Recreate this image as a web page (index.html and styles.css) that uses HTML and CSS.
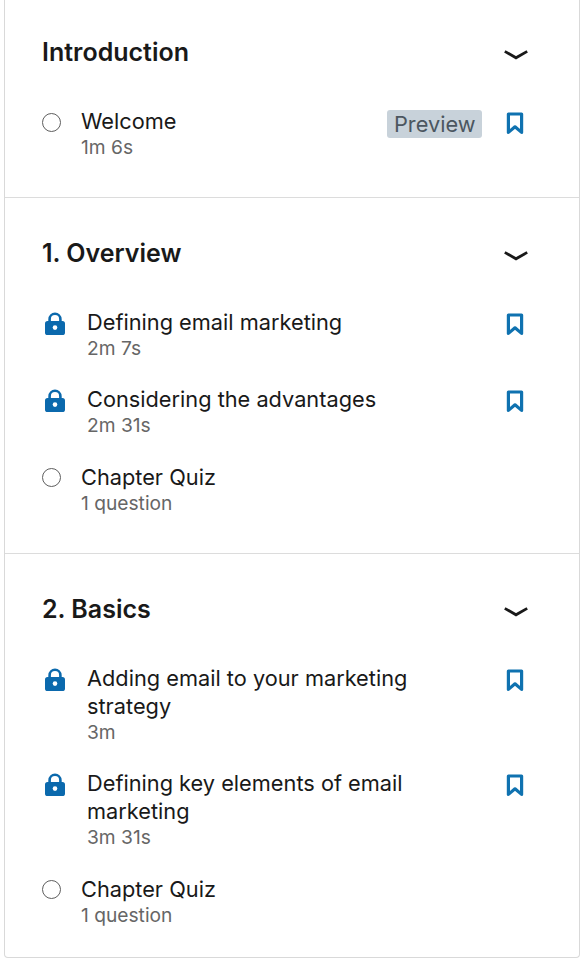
FILE: index.html
```html
<!DOCTYPE html>
<html lang="en">
<head>
<meta charset="utf-8">
<title>Course contents</title>
<link rel="stylesheet" href="styles.css">
</head>
<body>
<svg class="defs" width="0" height="0" aria-hidden="true">
  <symbol id="chev" viewBox="0 0 24 14"><path d="M.8 3.4 12 9.8 23.2 3.4" fill="none" stroke="#191919" stroke-width="2.8"/></symbol>
  <symbol id="mark" viewBox="0 0 18 24"><path d="M2.4 3h13.2v18.4L9 15.8 2.4 21.4z" fill="none" stroke="#0f72b0" stroke-width="3.2" stroke-linejoin="round"/></symbol>
  <symbol id="lock" viewBox="0 0 22 24"><path d="M5.6 10V7.2a5.4 5.4 0 0 1 10.8 0V10" fill="none" stroke="#0b69ad" stroke-width="2.6"/><rect x="1" y="9" width="20" height="14" rx="2.6" fill="#0b69ad"/><circle cx="11" cy="15.6" r="2.3" fill="#fff"/></symbol>
</svg>
<main class="panel">
  <section class="chapter intro">
    <header class="chapter-head"><h2>Introduction</h2><svg class="chev"><use href="#chev"/></svg></header>
    <div class="item quiz">
      <span class="radio"></span>
      <div class="body"><div class="title">Welcome</div><div class="meta">1m 6s</div></div>
      <span class="preview">Preview</span>
      <svg class="mark"><use href="#mark"/></svg>
    </div>
  </section>
  <section class="chapter">
    <header class="chapter-head"><h2>1. Overview</h2><svg class="chev"><use href="#chev"/></svg></header>
    <div class="item">
      <svg class="lock"><use href="#lock"/></svg>
      <div class="body"><div class="title">Defining email marketing</div><div class="meta">2m 7s</div></div>
      <svg class="mark"><use href="#mark"/></svg>
    </div>
    <div class="item">
      <svg class="lock"><use href="#lock"/></svg>
      <div class="body"><div class="title">Considering the advantages</div><div class="meta">2m 31s</div></div>
      <svg class="mark"><use href="#mark"/></svg>
    </div>
    <div class="item quiz">
      <span class="radio"></span>
      <div class="body"><div class="title">Chapter Quiz</div><div class="meta">1 question</div></div>
    </div>
  </section>
  <section class="chapter">
    <header class="chapter-head"><h2>2. Basics</h2><svg class="chev"><use href="#chev"/></svg></header>
    <div class="item">
      <svg class="lock"><use href="#lock"/></svg>
      <div class="body"><div class="title">Adding email to your marketing<br>strategy</div><div class="meta">3m</div></div>
      <svg class="mark"><use href="#mark"/></svg>
    </div>
    <div class="item">
      <svg class="lock"><use href="#lock"/></svg>
      <div class="body"><div class="title">Defining key elements of email<br>marketing</div><div class="meta">3m 31s</div></div>
      <svg class="mark"><use href="#mark"/></svg>
    </div>
    <div class="item quiz">
      <span class="radio"></span>
      <div class="body"><div class="title">Chapter Quiz</div><div class="meta">1 question</div></div>
    </div>
  </section>
</main>
</body>
</html>
```
FILE: styles.css
```css
* { box-sizing: border-box; }
html, body { margin: 0; padding: 0; background: #fff; }
body { font-family: Inter, "Liberation Sans", sans-serif; color: #191919; padding: 0 4px; }
.defs { position: absolute; }
.panel {
  height: 958px;
  border: 1px solid #d9d9d9;
  border-top: 0;
  border-radius: 0 0 4px 4px;
  display: flex;
  flex-direction: column;
}
.chapter { padding: 40px 0 38.4px 37px; border-bottom: 1px solid #dcdcdc; }
.chapter.intro { padding: 37px 0 38px 37px; }
.chapter:last-child { border-bottom: 0; }
.chapter-head {
  display: flex;
  justify-content: space-between;
  align-items: center;
  height: 30px;
  margin-bottom: 40px;
}
.chapter-head h2 { margin: 0; font-size: 25px; line-height: 30px; font-weight: 600; }
.chev { width: 24px; height: 14px; margin-right: 51px; margin-top: 6px; }
.item { display: flex; align-items: flex-start; margin-bottom: 25.3px; }
.item:last-child { margin-bottom: 0; }
.radio {
  flex: none;
  width: 19px;
  height: 19px;
  border: 1px solid #5e5e5e;
  border-radius: 50%;
  margin: 5.5px 20px 0 0;
}
.lock { flex: none; width: 22px; height: 24px; margin: 4px 21px 0 2px; }
.body { flex: 1; min-width: 0; }
.title { font-size: 21.75px; line-height: 28px; color: #191919; }
.meta { font-size: 19.2px; line-height: 24px; color: #666; }
.preview {
  background: #c8d2da;
  color: #4b5660;
  font-size: 21.75px;
  line-height: 28px;
  padding: 0 6.5px;
  border-radius: 3px;
  margin: 3px 24px 0 0;
}
.mark { flex: none; width: 18px; height: 24px; margin: 4px 55px 0 0; }
```
